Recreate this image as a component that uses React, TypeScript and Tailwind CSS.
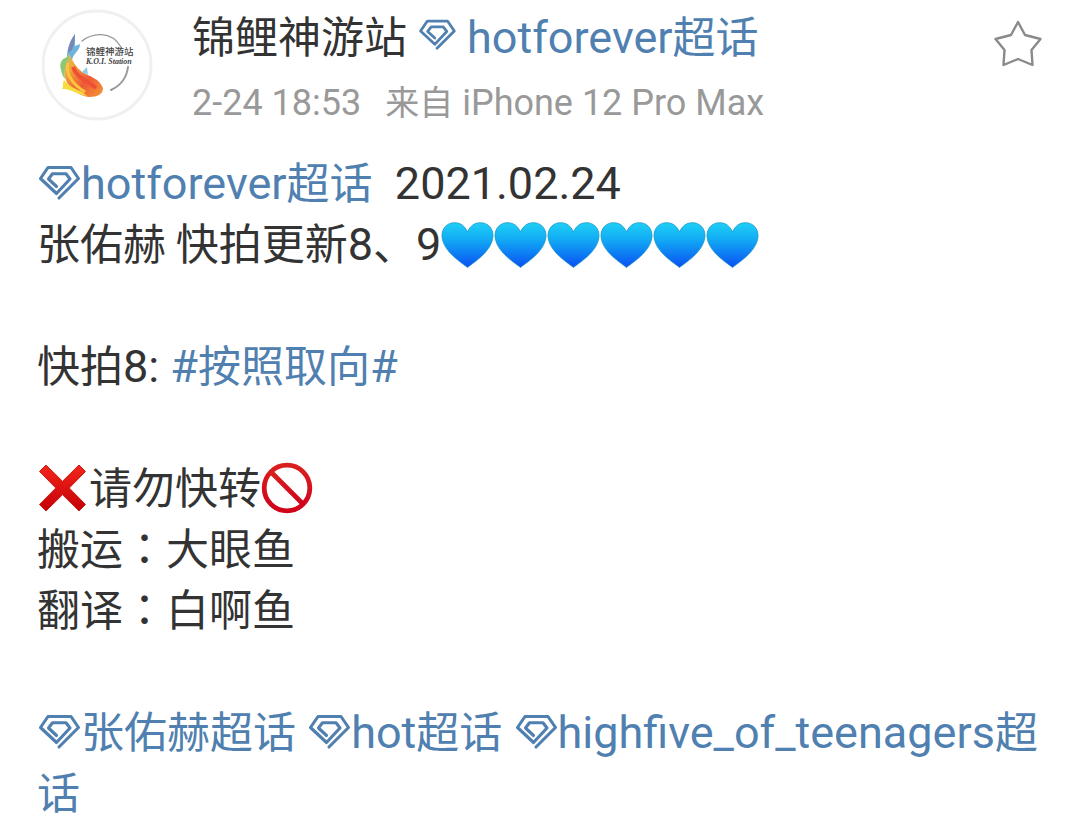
import type { ReactNode } from "react";

type Props = {
  children: ReactNode;
};

const HEARTS = 6;

const Latin = ({ children }: Props) => (
  <span className="font-['Roboto',sans-serif] text-[45px] leading-none">{children}</span>
);

const Gem = ({ className = "h-9 w-11 align-[-2px]" }: { className?: string }) => (
  <svg
    viewBox="0 0 44 36"
    fill="none"
    stroke="currentColor"
    strokeWidth="3.1"
    strokeLinejoin="round"
    strokeLinecap="round"
    className={`inline-block ${className}`}
    aria-hidden="true"
  >
    <path d="M22 33 41.500 13.500 34 2.500H11L3.500 13.500 19.500 28.500 33 14 29 8.800H15.500L11.500 14 19.500 21.500" />
  </svg>
);

const Topic = ({ children }: Props) => (
  <a href="#topic" className="text-[#5080b0]">
    <Gem />
    {children}
  </a>
);

const Heart = () => (
  <svg viewBox="0 0 52 46" className="inline-block h-[46px] w-[53px] align-[-8px]" role="img" aria-label="blue heart">
    <path
      d="M26 45.500C23 42.500 1 30 .5 14 .3 6 6 .7 13 .7c6 0 10.500 3.300 13 9.300C28.500 4 33 .7 39 .7 46 .7 51.700 6 51.500 14 51 30 29 42.500 26 45.500Z"
      fill="url(#heart)"
      stroke="#1597c9"
      strokeWidth=".8"
    />
  </svg>
);

const Cross = () => (
  <svg viewBox="0 0 52 50" className="inline-block h-[50px] w-[52px] align-[-9px]" role="img" aria-label="cross mark">
    <path
      d="M9 2 25.500 18.300 42 2 48.500 8.500 32.200 25 48.500 41.500 42 48 25.500 31.700 9 48 2.500 41.500 18.800 25 2.500 8.500Z"
      fill="url(#cross)"
      stroke="#c81e14"
      strokeWidth="1"
      strokeLinejoin="round"
    />
  </svg>
);

const Prohibited = () => (
  <svg viewBox="0 0 52 52" className="inline-block size-[52px] align-[-10px]" role="img" aria-label="prohibited">
    <g fill="none" stroke="url(#ban)" strokeWidth="4.800">
      <circle cx="26" cy="26" r="22.800" />
      <path d="M10 10 42 42" />
    </g>
  </svg>
);

const Gradients = () => (
  <svg className="absolute size-0" aria-hidden="true">
    <defs>
      <linearGradient id="heart" x1="0" y1="0" x2="0" y2="1">
        <stop offset="0" stopColor="#1fd0f5" />
        <stop offset=".35" stopColor="#12aef5" />
        <stop offset="1" stopColor="#0a50f2" />
      </linearGradient>
      <linearGradient id="cross" x1="0" y1="0" x2="0" y2="1">
        <stop offset="0" stopColor="#f4261b" />
        <stop offset="1" stopColor="#c40008" />
      </linearGradient>
      <linearGradient id="ban" x1="0" y1="0" x2="0" y2="1">
        <stop offset="0" stopColor="#d9201f" />
        <stop offset="1" stopColor="#d0021b" />
      </linearGradient>
      <linearGradient id="koi" x1="0" y1="0" x2="1" y2="1">
        <stop offset="0" stopColor="#b9c86a" />
        <stop offset=".25" stopColor="#f3a63c" />
        <stop offset=".6" stopColor="#ee5a36" />
        <stop offset="1" stopColor="#f39a35" />
      </linearGradient>
    </defs>
  </svg>
);

const Avatar = () => (
  <svg viewBox="0 0 112 112" className="size-28 shrink-0" role="img" aria-label="锦鲤神游站 K.O.I. Station">
    <circle cx="55" cy="56" r="54" fill="#fff" stroke="#f0f0f0" strokeWidth="3" />
    <g fill="none" stroke="#9a9a9a" strokeLinecap="round">
      <path d="M40 32C50 24 69 21 79 38" strokeWidth="1.400" />
      <path d="M86 58Q84 74 69 81" strokeWidth="2" />
    </g>
    {/* tail */}
    <path d="M33 25C28 32 25 40 25 48L30 51C32 43 38 42 38 35L33 37Z" fill="#6fb4dc" />
    <path d="M33 25C28 32 26 38 26 44L30 41 32 35Z" fill="#7b86b8" />
    {/* body */}
    <path
      d="M27 45C31 52 33 57 40 63C48 68 57 69 61 79C61 85 56 88 47 88C39 87 33 83 28 78C21 70 20 56 27 45Z"
      fill="url(#koi)"
    />
    <path d="M25 48C19 50 17 55 19 61C20 65 21 68 23 70C22 62 23 54 27 49Z" fill="#8cc878" />
    <path d="M26 54C23 64 30 75 43 83" fill="none" stroke="#fbc53d" strokeWidth="3" />
    <path d="M31 58C35 69 44 71 54 79" fill="none" stroke="#ee4f35" strokeWidth="4" />
    <path d="M22 71C20 75 22 77 20 80C28 79 36 86 45 87C38 80 29 80 22 71Z" fill="#f6dc3c" />
    <path d="M40 63 45 58 46 66Z" fill="#8ecce4" />
    <g fill="#444">
      <text x="44" y="46" fontSize="9.500" fontWeight="500" fontFamily="Noto Sans CJK SC, sans-serif">
        锦鲤神游站
      </text>
      <text x="44" y="55" fontSize="8" fontStyle="italic" fontWeight="700" fontFamily="Liberation Serif, serif">
        K.O.I. Station
      </text>
    </g>
  </svg>
);

const App = () => {
  return (
    <article className="min-h-screen bg-white font-['Noto_Sans_CJK_SC',sans-serif] text-[#333]" lang="zh-CN">
      <Gradients />
      <header className="flex items-start pt-[9px] pr-[38px] pl-[42px]">
        <Avatar />
        <div className="ml-[38px] flex-1">
          <h1 className="text-[43px] leading-[50px] whitespace-nowrap">
            <span className="mr-2">锦鲤神游站</span>
            <a href="#topic" className="text-[#5080b0]">
              <Gem className="mr-2 h-8 w-11 align-[2px]" />
              <Latin>hotforever</Latin>超话
            </a>
          </h1>
          <p className="mt-[17px] text-[34px] leading-[48px] whitespace-nowrap text-[#999]">
            <span className="mr-6 font-['Roboto',sans-serif] text-[36px] leading-none">2-24 18:53</span>
            来自<span className="font-['Roboto',sans-serif] text-[36px] leading-none"> iPhone 12 Pro Max</span>
          </p>
        </div>
        <button type="button" aria-label="收藏" className="mt-[11px]">
          <svg viewBox="0 0 48 48" fill="none" stroke="#8a8a8a" strokeWidth="2.400" strokeLinejoin="round" className="size-12">
            <path d="M24 2 31 15 46.500 19 37.500 30 38.500 45 24 39 9.500 45 10.500 30 1.500 19 17 15Z" />
          </svg>
        </button>
      </header>

      <div className="mt-[25px] pr-8 pl-[37px] text-[43px] leading-[61px] break-all">
        <p>
          <Topic>
            <Latin>hotforever</Latin>超话
          </Topic>
          <Latin>&nbsp; 2021.02.24</Latin>
        </p>
        <p>
          张佑赫 快拍更新<Latin>8</Latin>、<Latin>9</Latin>
          {Array.from({ length: HEARTS }, (_, index) => (
            <Heart key={index} />
          ))}
        </p>
        <p className="mt-[61px]">
          快拍<Latin>8: </Latin>
          <a href="#tag" className="text-[#5080b0]">
            <Latin>#</Latin>按照取向<Latin>#</Latin>
          </a>
        </p>
        <p className="mt-[61px]">
          <Cross />
          请勿快转
          <Prohibited />
        </p>
        <p>
          搬运<span className="font-['Noto_Sans_CJK_TC',sans-serif]" lang="zh-TW">：</span>大眼鱼
        </p>
        <p>
          翻译<span className="font-['Noto_Sans_CJK_TC',sans-serif]" lang="zh-TW">：</span>白啊鱼
        </p>
        <p className="mt-[61px]">
          <Topic>张佑赫超话</Topic>
          <Latin> </Latin>
          <Topic>
            <Latin>hot</Latin>超话
          </Topic>
          <Latin> </Latin>
          <Topic>
            <Latin>highfive_of_teenagers</Latin>超话
          </Topic>
        </p>
      </div>
    </article>
  );
};

export default App;
